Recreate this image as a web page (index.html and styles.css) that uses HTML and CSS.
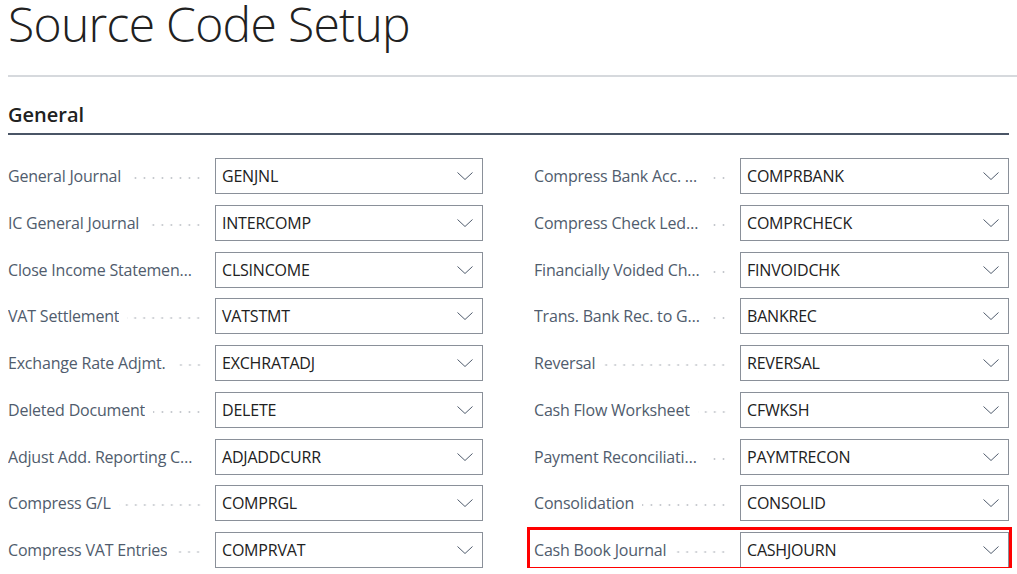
FILE: index.html
```html
<!DOCTYPE html>
<html>
<head>
<meta charset="utf-8">
<link rel="stylesheet" href="styles.css">
</head>
<body>
<div class="page">
  <h1 class="title">Source Code Setup</h1>
  <div class="rule"></div>
  <h2 class="section">General</h2>
  <div class="grid">
    <div class="col col-left">
      <div class="row"><span class="label">General Journal</span><span class="dots"></span><div class="box"><span class="val">GENJNL</span><svg class="chev" viewBox="0 0 16 8"><path d="M0.5 0.5 L8 7.5 L15.5 0.5" /></svg></div></div>
      <div class="row"><span class="label">IC General Journal</span><span class="dots"></span><div class="box"><span class="val">INTERCOMP</span><svg class="chev" viewBox="0 0 16 8"><path d="M0.5 0.5 L8 7.5 L15.5 0.5" /></svg></div></div>
      <div class="row"><span class="label">Close Income Statement Source Code</span><span class="dots"></span><div class="box"><span class="val">CLSINCOME</span><svg class="chev" viewBox="0 0 16 8"><path d="M0.5 0.5 L8 7.5 L15.5 0.5" /></svg></div></div>
      <div class="row"><span class="label">VAT Settlement</span><span class="dots"></span><div class="box"><span class="val">VATSTMT</span><svg class="chev" viewBox="0 0 16 8"><path d="M0.5 0.5 L8 7.5 L15.5 0.5" /></svg></div></div>
      <div class="row"><span class="label">Exchange Rate Adjmt.</span><span class="dots"></span><div class="box"><span class="val">EXCHRATADJ</span><svg class="chev" viewBox="0 0 16 8"><path d="M0.5 0.5 L8 7.5 L15.5 0.5" /></svg></div></div>
      <div class="row"><span class="label">Deleted Document</span><span class="dots"></span><div class="box"><span class="val">DELETE</span><svg class="chev" viewBox="0 0 16 8"><path d="M0.5 0.5 L8 7.5 L15.5 0.5" /></svg></div></div>
      <div class="row"><span class="label">Adjust Add. Reporting Currency</span><span class="dots"></span><div class="box"><span class="val">ADJADDCURR</span><svg class="chev" viewBox="0 0 16 8"><path d="M0.5 0.5 L8 7.5 L15.5 0.5" /></svg></div></div>
      <div class="row"><span class="label">Compress G/L</span><span class="dots"></span><div class="box"><span class="val">COMPRGL</span><svg class="chev" viewBox="0 0 16 8"><path d="M0.5 0.5 L8 7.5 L15.5 0.5" /></svg></div></div>
      <div class="row"><span class="label">Compress VAT Entries</span><span class="dots"></span><div class="box"><span class="val">COMPRVAT</span><svg class="chev" viewBox="0 0 16 8"><path d="M0.5 0.5 L8 7.5 L15.5 0.5" /></svg></div></div>
    </div>
    <div class="col col-right">
      <div class="row"><span class="label">Compress Bank Acc. Ledger</span><span class="dots"></span><div class="box"><span class="val">COMPRBANK</span><svg class="chev" viewBox="0 0 16 8"><path d="M0.5 0.5 L8 7.5 L15.5 0.5" /></svg></div></div>
      <div class="row"><span class="label">Compress Check Ledger</span><span class="dots"></span><div class="box"><span class="val">COMPRCHECK</span><svg class="chev" viewBox="0 0 16 8"><path d="M0.5 0.5 L8 7.5 L15.5 0.5" /></svg></div></div>
      <div class="row"><span class="label">Financially Voided Check</span><span class="dots"></span><div class="box"><span class="val">FINVOIDCHK</span><svg class="chev" viewBox="0 0 16 8"><path d="M0.5 0.5 L8 7.5 L15.5 0.5" /></svg></div></div>
      <div class="row"><span class="label">Trans. Bank Rec. to Gen. Jnl.</span><span class="dots"></span><div class="box"><span class="val">BANKREC</span><svg class="chev" viewBox="0 0 16 8"><path d="M0.5 0.5 L8 7.5 L15.5 0.5" /></svg></div></div>
      <div class="row"><span class="label">Reversal</span><span class="dots"></span><div class="box"><span class="val">REVERSAL</span><svg class="chev" viewBox="0 0 16 8"><path d="M0.5 0.5 L8 7.5 L15.5 0.5" /></svg></div></div>
      <div class="row"><span class="label">Cash Flow Worksheet</span><span class="dots"></span><div class="box"><span class="val">CFWKSH</span><svg class="chev" viewBox="0 0 16 8"><path d="M0.5 0.5 L8 7.5 L15.5 0.5" /></svg></div></div>
      <div class="row"><span class="label">Payment Reconciliation Journal</span><span class="dots"></span><div class="box"><span class="val">PAYMTRECON</span><svg class="chev" viewBox="0 0 16 8"><path d="M0.5 0.5 L8 7.5 L15.5 0.5" /></svg></div></div>
      <div class="row"><span class="label">Consolidation</span><span class="dots"></span><div class="box"><span class="val">CONSOLID</span><svg class="chev" viewBox="0 0 16 8"><path d="M0.5 0.5 L8 7.5 L15.5 0.5" /></svg></div></div>
      <div class="row highlighted"><span class="label">Cash Book Journal</span><span class="dots"></span><div class="box"><span class="val">CASHJOURN</span><svg class="chev" viewBox="0 0 16 8"><path d="M0.5 0.5 L8 7.5 L15.5 0.5" /></svg></div><div class="mark"></div></div>
    </div>
  </div>
</div>
</body>
</html>
```
FILE: styles.css
```css
html, body {
  margin: 0;
  padding: 0;
  background: #ffffff;
  overflow: hidden;
}
body {
  font-family: "Open Sans", "Noto Sans", sans-serif;
  color: #212121;
}
.page {
  padding: 0 0 0 8px;
  width: 1009px;
}
.title {
  margin: 0;
  margin-top: -4px;
  height: 74px;
  font-weight: 300;
  font-size: 48px;
  line-height: 56px;
  letter-spacing: -0.7px;
  color: #212121;
  white-space: nowrap;
}
.rule {
  height: 2px;
  background: #d6d9dd;
  margin-top: 5px;
}
.section {
  margin: 0;
  margin-top: 23px;
  font-size: 20px;
  font-weight: 600;
  line-height: 30px;
  color: #212121;
  width: 1001px;
  border-bottom: 2px solid #4a5566;
  padding-bottom: 3px;
}
.grid {
  display: grid;
  grid-template-columns: 475px 475px;
  column-gap: 51px;
  margin-top: 23px;
}
.col {
  display: flex;
  flex-direction: column;
  row-gap: 10.75px;
}
.row {
  position: relative;
  display: flex;
  align-items: center;
  height: 36px;
}
.label {
  flex: 0 1 auto;
  white-space: nowrap;
  overflow: hidden;
  text-overflow: ellipsis;
  font-size: 16px;
  line-height: 24px;
  color: #505c6d;
  letter-spacing: -0.2px;
}
.col-left .label { max-width: 186px; }
.col-right .label { max-width: 170px; }
.dots {
  flex: 1 1 auto;
  height: 4px;
  margin: 4px 12px 0 8px;
  background-image: radial-gradient(circle, #c4c7cc 0.9px, transparent 1.2px);
  background-size: 9px 4px;
  background-position: right center;
  background-repeat: repeat-x;
}
.box {
  flex: 0 0 268px;
  box-sizing: border-box;
  height: 36px;
  border: 1px solid #8a9099;
  display: flex;
  align-items: center;
  justify-content: space-between;
  padding: 0 9px 0 6px;
  background: #fff;
}
.col-right .box { flex-basis: 269px; }
.val {
  font-size: 16px;
  line-height: 24px;
  color: #212121;
  letter-spacing: -0.2px;
}
.chev {
  width: 16px;
  height: 8px;
  fill: none;
  stroke: #505c6d;
  stroke-width: 1;
}
.mark {
  position: absolute;
  left: -7px;
  top: -5px;
  right: -3px;
  bottom: -2px;
  border: 3px solid #ff0000;
  pointer-events: none;
}
```
